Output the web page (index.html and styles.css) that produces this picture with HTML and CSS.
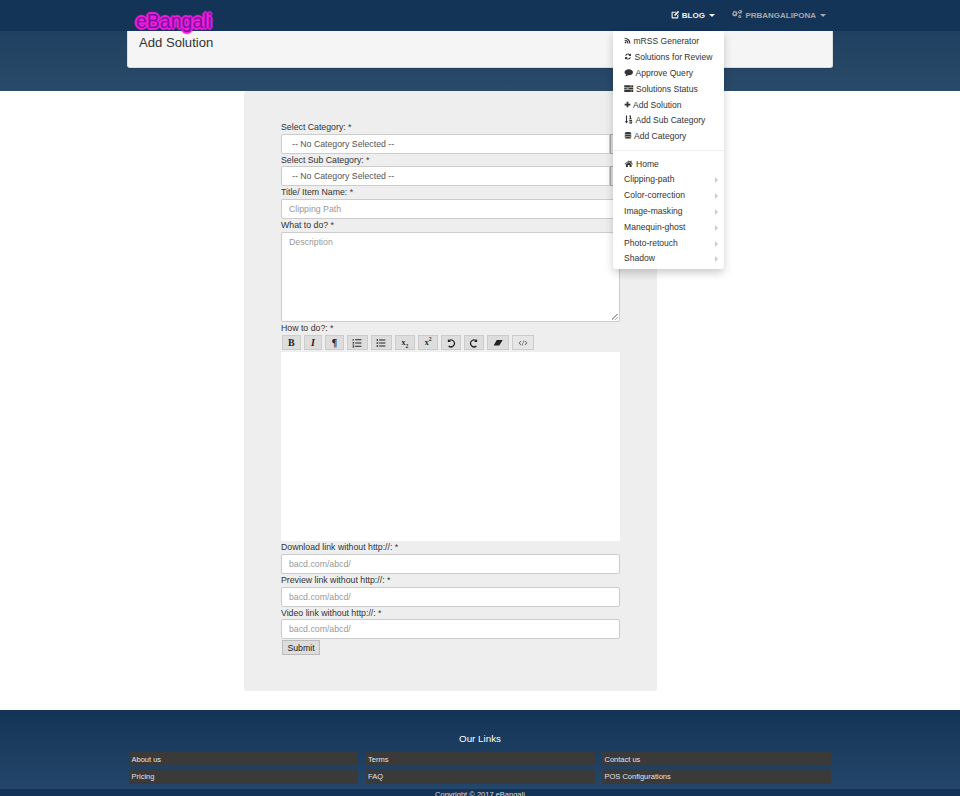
FILE: index.html
```html
<!DOCTYPE html>
<html lang="en">
<head>
<meta charset="utf-8">
<title>Add Solution</title>
<link rel="stylesheet" href="styles.css">
</head>
<body>
<nav class="topbar">
  <div class="container topbar-inner">
    <a class="logo" href="#">eBangali</a>
    <ul class="navlinks">
      <li class="navitem active">
        <a href="#"><svg class="ico" viewBox="0 0 16 16"><path d="M2 3h8l-2 2H3v8h8V9l2-2v6.500L12 15H2l-1-1V4z"/><path d="M6 8l6.500-6.500 2 2L8 10H6z"/></svg> BLOG <span class="caret"></span></a>
        <div class="menu">
          <a href="#"><svg class="ico i-s" viewBox="0 0 16 16"><circle cx="3.500" cy="12.500" r="2"/><path d="M1.500 6v2.600a6 6 0 0 1 6 6h2.600A8.600 8.600 0 0 0 1.500 6z"/><path d="M1.500 1.500v2.600a10.500 10.500 0 0 1 10.500 10.500h2.600A13 13 0 0 0 1.500 1.500z"/></svg> mRSS Generator</a>
          <a href="#"><svg class="ico i-m" viewBox="0 0 16 16"><path d="M8 2a6 6 0 0 1 4.200 1.700L14 2v5H9l1.800-1.800A4 4 0 0 0 4.300 6.500H2.200A6 6 0 0 1 8 2z"/><path d="M8 14a6 6 0 0 1-4.200-1.700L2 14V9h5l-1.800 1.800a4 4 0 0 0 6.500-1.300h2.100A6 6 0 0 1 8 14z"/></svg> Solutions for Review</a>
          <a href="#"><svg class="ico i-l" viewBox="0 0 16 16"><path d="M8 2c4.200 0 7.500 2.400 7.500 5.500S12.200 13 8 13l-1.500-.1C5.200 14 3.500 14.500 1.500 14.700c1-1 1.800-2.100 2-3.200C1.700 10.500.5 9.100.5 7.500.5 4.400 3.800 2 8 2z"/></svg> Approve Query</a>
          <a href="#"><svg class="ico i-l" viewBox="0 0 16 16"><path d="M0 2h16v3.200H0zM0 6.400h16v3.200H0zM0 10.800h16V14H0z"/><path class="ico-cut" d="M10 3h4v1h-4zM4 7.500h4v1H4zM11 12h3v1h-3z"/></svg> Solutions Status</a>
          <a href="#"><svg class="ico i-s" viewBox="0 0 16 16"><path d="M6 1.500h4V6h4.500v4H10v4.500H6V10H1.500V6H6z"/></svg> Add Solution</a>
          <a href="#"><svg class="ico i-l" viewBox="0 0 16 16"><path d="M3 1h2v10h2l-3 4-3-4h2z"/><path d="M9 1h3v5h1.500v1.500H8.500V6H10V2.500H9zM9 9h5v1.500H9zM9 11.500h5V15H9v-1.500h3.500v-.5H9z"/></svg> Add Sub Category</a>
          <a href="#"><svg class="ico i-m" viewBox="0 0 16 16"><ellipse cx="8" cy="3.500" rx="6.500" ry="2.500"/><path d="M1.500 5.500C3 7.500 13 7.500 14.500 5.500v2.500C13 10 3 10 1.500 8zM1.500 9.200c1.500 2 11.500 2 13 0v2.300c-1.500 2-11.500 2-13 0zM1.500 12.500c1.500 2 11.500 2 13 0v.5c0 1-3 2-6.500 2s-6.500-1-6.500-2z"/></svg> Add Category</a>
          <div class="divider"></div>
          <a href="#"><svg class="ico i-l" viewBox="0 0 16 16"><path d="M8 2.500L.5 8.800l.9 1L8 4.300l6.600 5.500.9-1L13 6.700V3h-2v2z"/><path d="M8 5.500l5 4.200V14H9.500v-3.500h-3V14H3V9.700z"/></svg> Home</a>
          <a class="sub" href="#">Clipping-path</a>
          <a class="sub" href="#">Color-correction</a>
          <a class="sub" href="#">Image-masking</a>
          <a class="sub" href="#">Manequin-ghost</a>
          <a class="sub" href="#">Photo-retouch</a>
          <a class="sub" href="#">Shadow</a>
        </div>
      </li>
      <li class="navitem">
        <a href="#"><svg class="ico i-cogs" viewBox="0 0 16 16"><path fill-rule="evenodd" d="M5 4l1 .3.800-.6 1 1-.5.800.4 1 1 .2v1.500l-1 .2-.4 1 .5.800-1 1-.8-.5-1 .4-.2 1H3.300l-.2-1-1-.4-.8.5-1-1 .5-.8-.4-1L0 8V6.500l1-.2.400-1-.5-.8 1-1 .8.6 1-.4.200-.9h1.500zM4 5.500a1.700 1.700 0 1 0 0 3.500 1.700 1.700 0 0 0 0-3.500z"/><path fill-rule="evenodd" d="M12.500 1l.3.800.8.100.6-.6 1 .8-.4.800.4.700.8.100v1.300l-.8.200-.4.700.4.800-1 .8-.6-.6-.8.100-.3.800-1.300-.3v-.8l-.7-.4-.8.400-.7-1 .6-.6V4.700l-.6-.6.700-1 .8.400.7-.4V2zM12 3.200a1.200 1.200 0 1 0 0 2.400 1.200 1.200 0 0 0 0-2.400z"/><path fill-rule="evenodd" d="M12 9.500a2.500 2.500 0 1 1 0 5 2.500 2.500 0 0 1 0-5zm0 1.500a1 1 0 1 0 0 2 1 1 0 0 0 0-2z"/></svg> PRBANGALIPONA <span class="caret"></span></a>
      </li>
    </ul>
  </div>
</nav>

<header class="band">
  <div class="container">
    <div class="panel"><h1>Add Solution</h1></div>
  </div>
</header>

<div class="container">
  <main class="card">
    <form class="form">
      <label class="lbl">Select Category: *</label>
      <div class="select-wrap">
        <select class="control select"><option>-- No Category Selected --</option></select>
        <span class="select-btn"></span>
      </div>
      <label class="lbl">Select Sub Category: *</label>
      <div class="select-wrap">
        <select class="control select"><option>-- No Category Selected --</option></select>
        <span class="select-btn"></span>
      </div>
      <label class="lbl">Title/ Item Name: *</label>
      <input class="control" type="text" placeholder="Clipping Path">
      <label class="lbl">What to do? *</label>
      <textarea class="control area" placeholder="Description"></textarea>
      <label class="lbl">How to do?: *</label>
      <div class="toolbar">
        <button type="button" class="tb tb-s serif"><b>B</b></button>
        <button type="button" class="tb tb-s serif"><b><i>I</i></b></button>
        <button type="button" class="tb tb-s serif"><b>¶</b></button>
        <button type="button" class="tb tb-m"><svg class="tb-ico" viewBox="0 0 16 16"><path d="M1 1.500h1.500v3H1zM1 6.500h2.500v1L2 9.500h1.500v1H1v-1l1.300-2H1zM1 12h2.500v3H1v-1h1.500v-.3H1.500v-.7h1V13H1zM5 2h10v1.600H5zM5 7.200h10v1.600H5zM5 12.400h10V14H5z"/></svg></button>
        <button type="button" class="tb tb-m"><svg class="tb-ico" viewBox="0 0 16 16"><path d="M1 2h2.400v2.400H1zM1 6.800h2.400v2.400H1zM1 11.600h2.400V14H1zM5 2.400h10V4H5zM5 7.200h10v1.600H5zM5 12h10v1.600H5z"/></svg></button>
        <button type="button" class="tb serif tb-x"><b>x<sub>2</sub></b></button>
        <button type="button" class="tb serif tb-x"><b>x<sup>2</sup></b></button>
        <button type="button" class="tb"><svg class="tb-ico" viewBox="0 0 16 16"><path d="M3 1.500v5h5L6 4.500A4.500 4.500 0 1 1 5 12l-1.500 1.500A6.500 6.500 0 1 0 4.600 3.100z"/></svg></button>
        <button type="button" class="tb"><svg class="tb-ico" viewBox="0 0 16 16"><path d="M13 1.500v5H8l2-2A4.500 4.500 0 1 0 11 12l1.500 1.500A6.500 6.500 0 1 1 11.400 3.100z"/></svg></button>
        <button type="button" class="tb tb-w"><svg class="tb-ico" viewBox="0 0 16 16"><path d="M6 3h9.500L10 12H1z"/></svg></button>
        <button type="button" class="tb tb-w tb-light"><svg class="tb-ico" viewBox="0 0 16 16"><path d="M4.500 4.500L1 8l3.500 3.500.8-.8L2.600 8l2.700-2.700zM11.500 4.500l3.500 3.500-3.500 3.500-.8-.8L13.400 8l-2.700-2.700zM9 3.500h1L7 12.500H6z"/></svg></button>
      </div>
      <div class="editor"></div>
      <label class="lbl">Download link without http://: *</label>
      <input class="control" type="text" placeholder="bacd.com/abcd/">
      <label class="lbl">Preview link without http://: *</label>
      <input class="control" type="text" placeholder="bacd.com/abcd/">
      <label class="lbl">Video link without http://: *</label>
      <input class="control" type="text" placeholder="bacd.com/abcd/">
      <button type="button" class="submit">Submit</button>
    </form>
  </main>
</div>

<footer class="footer">
  <div class="footer-main">
    <h2>Our Links</h2>
    <div class="footer-links">
      <a href="#">About us</a>
      <a href="#">Terms</a>
      <a href="#">Contact us</a>
      <a href="#">Pricing</a>
      <a href="#">FAQ</a>
      <a href="#">POS Configurations</a>
    </div>
  </div>
  <div class="copyright">Copyright © 2017 eBangali</div>
</footer>
</body>
</html>
```
FILE: styles.css
```css
* { box-sizing: border-box; }
html, body { margin: 0; padding: 0; height: 796px; overflow: hidden; }
body {
  background: #fff;
  color: #333;
  font-family: "Liberation Sans", Arial, sans-serif;
  font-size: 8.750px;
  line-height: 1.45;
}
a { color: inherit; text-decoration: none; }

.container { width: 706px; margin: 0 auto; }

.topbar { height: 31px; background: #133456; position: relative; z-index: 5; }
.topbar-inner { display: flex; justify-content: space-between; align-items: stretch; height: 31px; }
.logo {
  margin: 10px 0 0 9px;
  font-size: 19.500px;
  line-height: 22px;
  height: 22px;
  color: #7a0f9e;
  text-shadow:
    2px 0 1px #f01fe0, -2px 0 1px #f01fe0, 0 2px 1px #f01fe0, 0 -2px 1px #f01fe0,
    1px 1px 1px #f01fe0, -1px 1px 1px #f01fe0, 1px -1px 1px #f01fe0, -1px -1px 1px #f01fe0;
}
.navlinks { display: flex; list-style: none; margin: 0 -1px 0 0; padding: 0; }
.navitem { position: relative; font-size: 8px; font-weight: bold; color: #a9a9a9; margin-left: 1px; }
.navitem > a { display: block; padding: 0 8px; line-height: 31px; white-space: nowrap; }
.navitem.active { color: #f2f2f2; }
.ico { width: 9px; height: 9px; fill: currentColor; vertical-align: -1px; }
.i-s { width: 7px; }
.i-m { width: 8px; }
.i-l { width: 9.500px; }
.i-cogs { width: 10.500px; height: 10px; margin-right: .5px; }
.ico-cut { fill: #fff; }
.caret {
  display: inline-block;
  margin-left: 2px;
  vertical-align: 1px;
  border-top: 3px solid currentColor;
  border-left: 3px solid transparent;
  border-right: 3px solid transparent;
}

.menu {
  position: absolute;
  top: 31px;
  left: -50px;
  width: 111px;
  height: 238px;
  padding: 3.400px 0 3px;
  background: #fff;
  border-radius: 0 0 3px 3px;
  box-shadow: 0 4px 9px rgba(0, 0, 0, .2);
  font-size: 8.550px;
  font-weight: normal;
  color: #333;
}
.menu a { display: block; height: 15.800px; line-height: 15.800px; padding: 0 12px 0 11.500px; position: relative; white-space: nowrap; }
.menu .sub::after {
  content: "";
  position: absolute;
  right: 6px;
  top: 5px;
  border-left: 3px solid #ccc;
  border-top: 3px solid transparent;
  border-bottom: 3px solid transparent;
}
.divider { height: 1px; margin: 5.300px 0; background: #eee; }

.band { height: 60px; background: linear-gradient(#1f4060, #2a4a69); }
.panel {
  height: 37px;
  padding: 3px 11px;
  background: #f5f5f5;
  border: 1px solid #ddd;
  border-top: 0;
  border-radius: 0 0 3px 3px;
  box-shadow: 0 1px 1px rgba(0, 0, 0, .1);
}
.panel h1 { margin: 0; font-size: 13.100px; font-weight: normal; line-height: 18px; color: #333; }

.card {
  width: 413px;
  height: 600px;
  margin-left: 117px;
  padding: 30px 37px 0;
  background: #eee;
  border-radius: 3px;
}
.form { display: flex; flex-direction: column; align-items: stretch; }
.lbl { display: block; height: 12.700px; line-height: 13.500px; color: #333; }
.control {
  display: block;
  width: 100%;
  height: 20px;
  padding: 0 7px;
  background: #fff;
  border: 1px solid #ccc;
  border-radius: 2px;
  font: 8.750px "Liberation Sans", Arial, sans-serif;
  color: #555;
  outline: none;
}
.control::placeholder { color: #999; opacity: 1; }
.select-wrap { display: flex; height: 20px; }
.select { flex: 1; min-width: 0; width: auto; padding: 0 0 0 10px; appearance: none; -webkit-appearance: none; border-radius: 2px 0 0 2px; }
.select-btn { width: 10px; background: #ddd; border: 1px solid #aaa; }
.area { height: 90.500px; padding: 4px 7px; }
.area::-webkit-resizer {
  background: linear-gradient(135deg, transparent 40%, #aaa 40%, #aaa 52%, transparent 52%, transparent 70%, #aaa 70%, #aaa 82%, transparent 82%) right 1px bottom 1px / 6px 6px no-repeat;
}

.toolbar { display: flex; gap: 3.100px; height: 16.250px; margin-bottom: .5px; padding-left: 1px; }
.tb {
  display: flex;
  align-items: center;
  justify-content: center;
  width: 20px;
  height: 15.500px;
  padding: 0;
  background: #ddd;
  border: 1px solid #ccc;
  color: #222;
  font: 8.750px "Liberation Sans", Arial, sans-serif;
}
.tb-s { width: 18.500px; }
.tb-m { width: 21px; }
.tb-w { width: 22px; }
.tb-light { background: #e6e6e6; }
.serif { font-family: "Liberation Serif", "Times New Roman", serif; font-size: 10px; }
.tb-x { font-size: 8px; }
.tb-x sub, .tb-x sup { font-size: 5.500px; line-height: 0; }
.tb-ico { width: 10px; height: 10px; fill: #222; }
.tb-light .tb-ico { fill: #555; }

.editor { height: 189.500px; background: #fff; }
.submit {
  align-self: flex-start;
  width: 38px;
  height: 15.500px;
  margin: .5px 0 0 1px;
  padding: 0;
  background: #ddd;
  border: 1px solid #bbb;
  color: #222;
  font: 8.750px "Liberation Sans", Arial, sans-serif;
}

.footer { margin-top: 18.500px; height: 100px; }
.footer-main { height: 79px; padding-top: 22px; background: linear-gradient(#133456, #24466a); }
.footer h2 { margin: 0 0 7px; font-size: 9.800px; font-weight: normal; line-height: 13px; text-align: center; color: #fff; }
.footer-links {
  display: grid;
  grid-template-columns: repeat(3, 229px);
  column-gap: 7.500px;
  row-gap: 3px;
  width: 702px;
  margin: 0 auto;
}
.footer-links a {
  height: 14.500px;
  padding: 0 2.500px;
  line-height: 15px;
  background: #3a3a3a;
  border-radius: 1px;
  color: #e4e4e4;
  font-size: 7.500px;
}
.copyright { height: 21px; background: #133456; color: #ddd; font-size: 7.500px; line-height: 12px; text-align: center; }
```
